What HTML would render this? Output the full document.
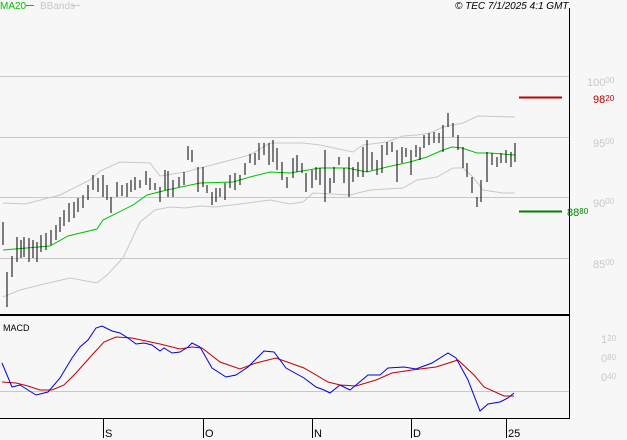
<!DOCTYPE html><html><head><style>
body{margin:0;background:#f7f7f7;width:627px;height:440px;overflow:hidden;font-family:"Liberation Sans",sans-serif}
svg{position:absolute;left:0;top:0}
</style></head><body>
<svg width="627" height="440" viewBox="0 0 627 440" xmlns="http://www.w3.org/2000/svg" font-family="Liberation Sans, sans-serif">
<rect width="627" height="440" fill="#f7f7f7"/>
<g stroke="#c8c8c8" stroke-width="1">
<line x1="0" y1="76.5" x2="569" y2="76.5"/><line x1="0" y1="137.5" x2="569" y2="137.5"/>
<line x1="0" y1="197.5" x2="569" y2="197.5"/><line x1="0" y1="258.5" x2="569" y2="258.5"/>
<line x1="0" y1="391.5" x2="569" y2="391.5"/>
</g>
<line x1="569.5" y1="8" x2="569.5" y2="419" stroke="#000"/>
<line x1="0" y1="315" x2="569" y2="315" stroke="#000" stroke-width="2"/>
<line x1="0" y1="418.5" x2="569" y2="418.5" stroke="#000"/>
<g stroke="#000"><line x1="103.5" y1="418" x2="103.5" y2="438"/><line x1="203.5" y1="418" x2="203.5" y2="438"/><line x1="312.5" y1="418" x2="312.5" y2="438"/><line x1="411.5" y1="418" x2="411.5" y2="438"/><line x1="506.5" y1="418" x2="506.5" y2="438"/></g>
<g font-size="11" fill="#000"><text x="105" y="437">S</text><text x="205" y="437">O</text><text x="314" y="437">N</text><text x="413" y="437">D</text><text x="508" y="437">25</text></g>
<text x="0" y="9" font-size="10" fill="#00c000">MA20</text><line x1="26" y1="5.5" x2="34" y2="5.5" stroke="#00c000"/>
<text x="40" y="9" font-size="10" fill="#c8c8c8">BBands</text><line x1="72" y1="5.5" x2="80" y2="5.5" stroke="#c8c8c8"/>
<text x="455" y="9" font-size="10" font-style="italic" fill="#000">© TEC 7/1/2025 4:1 GMT</text>
<text x="3" y="331" font-size="9" fill="#000">MACD</text>
<g font-size="11" fill="#c8c8c8"><text x="587" y="86">100<tspan font-size="8" dy="-3">00</tspan></text>
<text x="593" y="147">95<tspan font-size="8" dy="-3">00</tspan></text>
<text x="593" y="207">90<tspan font-size="8" dy="-3">00</tspan></text>
<text x="593" y="268">85<tspan font-size="8" dy="-3">00</tspan></text>
<text x="601" y="343">1<tspan font-size="8" dy="-2">20</tspan></text>
<text x="601" y="362">0<tspan font-size="8" dy="-2">80</tspan></text>
<text x="601" y="381">0<tspan font-size="8" dy="-2">40</tspan></text></g>
<line x1="519" y1="97.5" x2="562" y2="97.5" stroke="#c00000" stroke-width="2"/>
<text x="593" y="103" font-size="11" fill="#c00000">98<tspan font-size="8" dy="-2">20</tspan></text>
<line x1="519" y1="211.5" x2="562" y2="211.5" stroke="#008000" stroke-width="2"/>
<text x="567" y="216" font-size="11" fill="#008000">88<tspan font-size="8" dy="-2">80</tspan></text>
<g fill="none" stroke="#c8c8c8">
<polyline points="3,203 25,204 60,195 90,180 100,171 120,162 150,163 160,176 185,172 250,155 270,143 287,143 303,143 320,145 353,152 363,145 387,142 403,136 417,135 430,133 443,127 463,123 478,116 515,117"/>
<polyline points="3,297 20,290 40,285 70,278 97,283 107,275 123,258 140,222 155,210 170,207 185,208 200,206 215,207 240,204 270,200 290,204 303,202 313,193 350,195 370,190 403,188 417,180 437,177 453,168 463,168 473,177 483,190 503,193 515,193"/>
</g>
<polyline fill="none" stroke="#00c000" points="3,250 50,246 68,236 97,229 103,220 133,205 147,195 167,190 200,183 233,182 250,177 270,172 290,173 320,168 347,168 367,172 387,167 410,162 427,157 443,150 452,147 462,148 477,153 490,153 515,155"/>
<path stroke="#000" fill="none" shape-rendering="crispEdges" d="M3 222V245M7 272V307M12 256V277M17 237V262M21 240V258M24 237V257M29 238V262M33 240V258M37 242V262M41 235V252M46 233V250M51 230V245M56 225V240M60 217V232M64 210V226M69 203V222M74 202V218M78 198V212M83 195V208M88 185V200M93 175V190M98 178V192M103 175V197M107 185V200M111 197V213M117 182V197M122 185V196M127 183V197M131 180V192M135 177V190M140 180V188M146 171V185M150 178V190M155 183V190M160 187V202M165 170V190M168 171V197M173 180V197M179 177V187M184 172V185M188 146V160M192 150V162M198 167V192M203 167V187M207 185V193M212 192V205M216 188V202M220 188V197M225 183V200M230 175V188M235 173V190M240 175V185M245 163V175M250 154V163M255 153V165M259 143V160M264 143V155M269 143V165M273 140V162M277 148V170M282 162V180M287 177V188M293 158V178M297 155V172M302 163V173M306 173V192M312 170V188M316 167V180M320 168V185M325 150V202M330 178V193M334 167V183M339 157V165M344 168V183M349 157V197M353 167V182M358 162V177M363 147V177M367 140V172M372 152V170M377 160V175M382 145V173M387 142V155M392 142V152M397 150V182M402 147V163M406 148V157M411 150V175M416 145V157M420 147V160M424 135V148M429 133V145M434 132V143M439 133V143M443 125V152M448 113V127M453 123V137M458 135V150M463 147V168M467 163V177M472 177V193M477 197V207M481 180V202M487 152V182M492 153V165M497 157V167M501 153V163M506 150V163M511 152V167M515 143V162"/>
<polyline fill="none" stroke="#c00000" points="2,382 16,383 28,386 40,390 52,390 64,385 76,373 92,355 104,342 116,337 132,338 160,344 180,349 192,347 202,348 220,362 240,369 256,363 276,358 304,368 328,382 340,385 356,386 376,380 392,373 412,370 436,367 458,360 474,375 484,387 504,396 514,396"/>
<polyline fill="none" stroke="#0000e0" points="2,363 12,387 20,385 36,395 48,392 60,378 72,358 80,347 88,340 96,328 102,326 112,331 120,333 128,338 136,344 144,343 152,345 160,351 164,348 172,353 180,352 188,347 192,343 200,347 212,368 226,377 236,375 248,367 264,351 274,352 286,368 304,378 316,387 324,390 330,393 340,385 350,390 362,380 368,375 380,375 388,368 404,367 416,369 432,363 448,353 456,358 468,380 480,411 488,404 500,402 508,398 514,393"/>
</svg>
</body></html>
